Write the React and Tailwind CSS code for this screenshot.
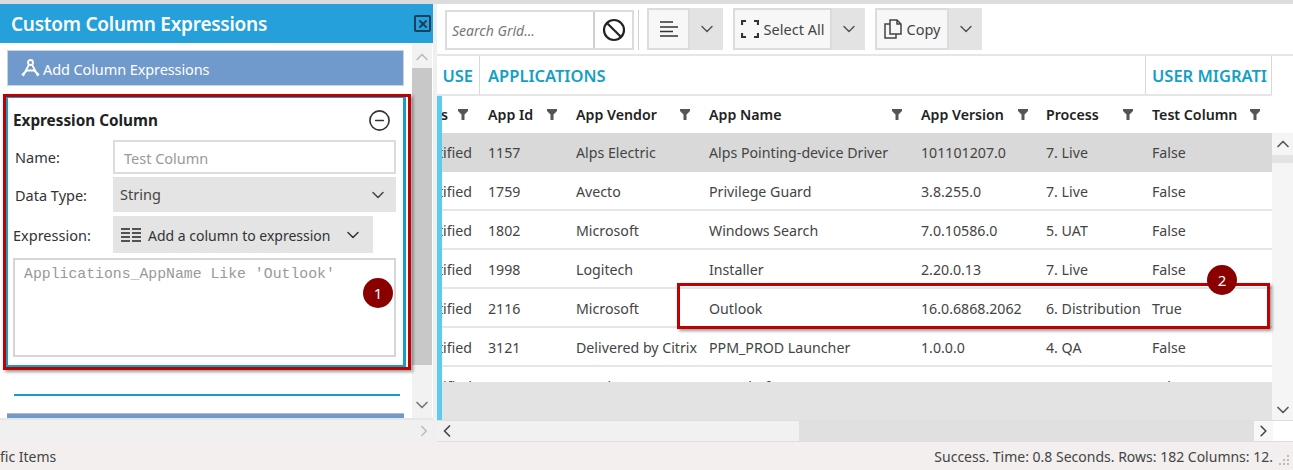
import React from 'react'
import { Ban, ChevronDown, ChevronUp, ChevronLeft, ChevronRight, X, MinusCircle } from 'lucide-react'

const columns = [
  { title: 'App Id', width: 'w-[88px]', filter: 'w-[69px]' },
  { title: 'App Vendor', width: 'w-[133px]', filter: 'w-[114px]' },
  { title: 'App Name', width: 'w-[212px]', filter: 'w-[193px]' },
  { title: 'App Version', width: 'w-[125px]', filter: 'w-[107px]' },
  { title: 'Process', width: 'w-[106px]', filter: 'w-[87px]' },
  { title: 'Test Column', width: 'w-[120px]', filter: 'w-[108px]' },
]

const rows = [
  ['1157', 'Alps Electric', 'Alps Pointing-device Driver', '101101207.0', '7. Live', 'False'],
  ['1759', 'Avecto', 'Privilege Guard', '3.8.255.0', '7. Live', 'False'],
  ['1802', 'Microsoft', 'Windows Search', '7.0.10586.0', '5. UAT', 'False'],
  ['1998', 'Logitech', 'Installer', '2.20.0.13', '7. Live', 'False'],
  ['2116', 'Microsoft', 'Outlook', '16.0.6868.2062', '6. Distribution', 'True'],
  ['3121', 'Delivered by Citrix', 'PPM_PROD Launcher', '1.0.0.0', '4. QA', 'False'],
  ['3196', 'Oracle', 'Java Platform SE', '7.0.147.0', '5. UAT', 'False'],
]

function Funnel() {
  return (
    <svg width="10" height="11" viewBox="0 0 10 11" className="shrink-0">
      <path d="M0 0h10v2L6.5 5.500V11h-3V5.500L0 2z" fill="#555" />
    </svg>
  )
}

function SplitButton({ children, width }) {
  return (
    <div className="flex h-[42px] bg-[#e3e3e3]">
      <div className={`flex items-center justify-center gap-[5px] border-2 border-[#dcdcdc] bg-[#f7f7f7] text-[#444] ${width}`}>{children}</div>
      <div className="flex w-[33px] items-center justify-center text-[#555]"><ChevronDown size={20} strokeWidth={1.8} /></div>
    </div>
  )
}

function Field({ label, children, className }) {
  return (
    <div className={`flex items-center ${className}`}>
      <div className="w-[98px] shrink-0 pt-[2px] text-[14.500px] text-[#333]">{label}</div>
      {children}
    </div>
  )
}

function LeftPanel() {
  return (
    <div className="relative flex w-[433px] shrink-0 flex-col">
      <div className="flex h-[39px] shrink-0 items-center justify-between bg-[#25a0da] pl-[11px] pr-[2px]">
        <span className="pt-[1px] text-[19px] font-semibold tracking-[-0.25px] text-white">Custom Column Expressions</span>
        <div className="flex h-[17px] w-[17px] items-center justify-center rounded-[2px] border-2 border-[#1d3f58] text-[#1d3f58]"><X size={12} strokeWidth={4} /></div>
      </div>
      <div className="flex h-[375px] shrink-0 overflow-hidden">
        <div className="flex w-[412px] flex-col overflow-hidden px-[7px] pt-[7px]">
          <div className="flex h-[36px] w-[397px] shrink-0 items-center border border-[#c9d3e2] bg-[#7099cc] pl-[13px] pt-[3px] text-[14.500px] tracking-[-0.1px] text-white">
            <svg width="19" height="19" viewBox="0 0 19 19" fill="none" stroke="white" strokeWidth="1.800" className="mr-[3px] mt-[-3px] shrink-0">
              <circle cx="9.500" cy="3.500" r="2.500" />
              <path d="M8 5.500L2 17M11 5.500L17 17M1 16l5-4.500h7l5 4.500" />
            </svg>
            Add Column Expressions
          </div>
          <div className="ml-[-2px] mt-[10px] h-[271px] w-[401px] shrink-0 border-2 border-x-[3px] border-[#14a0c6] px-[5px]">
            <div className="flex h-[34px] items-center justify-between pt-[10px] pr-[7px]">
              <span className="text-[15.300px] font-bold text-[#222]">Expression Column</span>
              <MinusCircle size={23} strokeWidth={1.700} className="text-[#333]" />
            </div>
            <div className="mt-[8px] text-[14.500px]">
              <Field label="Name:" className="pl-[2px]">
                <div className="flex h-[34px] w-[283px] items-center border-2 border-[#dcdcdc] pl-[9px] pt-[3px] text-[#999]">Test Column</div>
              </Field>
              <Field label="Data Type:" className="mt-[3px] pl-[2px]">
                <div className="flex h-[35px] w-[283px] items-center justify-between bg-[#e4e4e4] pl-[7px] pr-[8px] text-[#444]">String<ChevronDown size={20} strokeWidth={1.800} /></div>
              </Field>
              <Field label="Expression:" className="mt-[4px]">
                <div className="ml-[2px] flex h-[37px] w-[260px] items-center bg-[#e4e4e4] pl-[8px] text-[#333]">
                  <svg width="20" height="16" viewBox="0 0 20 16" stroke="#222" strokeWidth="1.500" className="mr-[7px] shrink-0">
                    <path d="M0 2h9M11 2h9M0 6h9M11 6h9M0 10h9M11 10h9M0 14h9M11 14h9" />
                  </svg>
                  <span className="whitespace-nowrap pt-[2px] text-[14px]">Add a column to expression</span>
                  <ChevronDown size={20} strokeWidth={1.800} className="ml-[13px] shrink-0" />
                </div>
              </Field>
            </div>
            <div className="mt-[5px] h-[99px] w-[383px] border-2 border-[#d6d6d6] pl-[9px] pt-[5px] font-['Liberation_Mono',monospace] text-[14.800px] leading-[18px] text-[#999]">Applications_AppName Like 'Outlook'</div>
          </div>
          <div className="ml-[7px] mt-[27px] h-[2px] w-[386px] shrink-0 bg-[#14a0c6]" />
          <div className="mt-[17px] h-[5px] w-[397px] shrink-0 border-t border-[#bbb] bg-[#7099cc]" />
        </div>
        <div className="flex w-[20px] flex-col bg-[#f2f2f2]">
          <div className="flex h-[25px] items-center justify-center pt-[3px] text-[#bbb]"><ChevronUp size={20} /></div>
          <div className="h-[297px] bg-[#c8c8c8]" />
          <div className="mt-auto flex h-[26px] items-center justify-center text-[#777]"><ChevronDown size={20} /></div>
        </div>
      </div>
      <div className="flex h-[24px] shrink-0 items-center justify-end border-t-2 border-[#e6e6e6] bg-[#f0f0f0] text-[#bbb]"><ChevronRight size={18} /></div>
      <div className="absolute left-[3px] top-[90px] h-[276px] w-[408px] border-[3px] border-[#c00000] shadow-[2px_2px_3px_rgba(0,0,0,0.4)]" />
      <div className="absolute left-[363px] top-[274px] flex h-[30px] w-[30px] items-center justify-center rounded-full bg-[#8a0000] text-[15px] text-white">1</div>
    </div>
  )
}

function Toolbar() {
  return (
    <div className="flex h-[52px] shrink-0 items-start border-b-2 border-[#e6e6e6] pl-[8px] pt-[4px] text-[14.500px]">
      <div className="mt-[2px] flex h-[40px] w-[189px] border-2 border-[#dcdcdc]">
        <div className="flex w-[148px] items-center border-r-2 border-[#d0d0d0] pl-[5px] text-[14px] italic text-[#777]">Search Grid...</div>
        <div className="flex flex-1 items-center justify-center text-[#222]"><Ban size={24} strokeWidth={2.200} /></div>
      </div>
      <div className="ml-[4px] mr-[8px] mt-[2px] h-[40px] w-[1px] bg-[#d0d0d0]" />
      <SplitButton width="w-[43px]">
        <svg width="18" height="16" viewBox="0 0 18 16" stroke="#333" strokeWidth="1.600" className="shrink-0">
          <path d="M0 1h13M0 6h18M0 10.500h13M0 15h18" />
        </svg>
      </SplitButton>
      <div className="w-[10px]" />
      <SplitButton width="w-[99px]">
        <svg width="18" height="18" viewBox="0 0 18 18" fill="none" stroke="#333" strokeWidth="2.200" className="shrink-0">
          <path d="M1 5V1h4M13 1h4v4M17 13v4h-4M5 17H1v-4" />
        </svg>
        <span className="pt-[2px]">Select All</span>
      </SplitButton>
      <div className="w-[10px]" />
      <SplitButton width="w-[74px]">
        <svg width="18" height="20" viewBox="0 0 18 20" fill="none" stroke="#444" strokeWidth="1.500" className="shrink-0">
          <path d="M6 15V1h7l4 4v10zM13 1v4h4" />
          <path d="M6 5H1v14h11v-4" />
        </svg>
        <span className="pt-[2px]">Copy</span>
      </SplitButton>
    </div>
  )
}

function Grid() {
  return (
    <div className="relative flex min-h-0 flex-1 flex-col overflow-hidden">
      <div className="flex h-[40px] w-[835px] shrink-0 items-center border-b-2 border-[#e6e6e6] text-[16.500px] font-semibold text-[#14a0c6]">
        <div className="flex h-full w-[43px] items-center justify-end border-r border-[#d8d8d8] pr-[6px] pt-[3px]">USE</div>
        <div className="flex h-full flex-1 items-center pl-[8px] pt-[3px]">APPLICATIONS</div>
        <div className="flex h-full w-[127px] items-center overflow-hidden whitespace-nowrap border-x border-[#d8d8d8] pl-[6px] pr-[3px] pt-[3px]"><span className="overflow-hidden">USER MIGRATION</span></div>
      </div>
      <div className="flex h-[324px] shrink-0">
        <div className="h-[324px] w-[5px] shrink-0 bg-[#5ccbee]" />
        <div className="flex h-[324px] w-[830px] shrink-0 flex-col">
          <div className="h-[286px] shrink-0 overflow-hidden">
            <div className="flex h-[37px] items-center text-[14.200px] font-semibold text-[#222]">
              <div className="flex w-[38px] shrink-0 items-center justify-end overflow-hidden pr-[12px]">
                <span className="mr-[10px]">ss</span><Funnel />
              </div>
              {columns.map(c => (
                <div key={c.title} className={`flex shrink-0 items-center pl-[8px] ${c.width}`}>
                  <div className={`flex items-center justify-between ${c.filter}`}>
                    <span className="whitespace-nowrap">{c.title}</span>
                    <Funnel />
                  </div>
                </div>
              ))}
            </div>
            {rows.map((r, i) => (
              <div key={r[0]} className={`flex h-[39px] shrink-0 items-center border-b-2 pt-[3px] text-[14.200px] text-[#444] ${i === 0 ? 'border-[#d9d9d9] bg-[#d9d9d9]' : 'border-[#e6e6e6]'}`}>
                <div className="flex w-[38px] shrink-0 justify-end overflow-hidden pr-[8px]">Certified</div>
                {r.map((v, j) => (
                  <div key={j} className={`shrink-0 overflow-hidden whitespace-nowrap pl-[8px] ${columns[j].width}`}>{v}</div>
                ))}
              </div>
            ))}
          </div>
          <div className="flex-1 bg-[#e3e3e3]" />
        </div>
        <div className="flex h-[324px] w-[21px] shrink-0 flex-col">
          <div className="h-[37px] shrink-0" />
          <div className="flex min-h-0 flex-1 flex-col bg-[#f5f5f5]">
            <div className="flex h-[22px] items-center justify-center text-[#555]"><ChevronUp size={20} /></div>
            <div className="h-[8px] bg-[#e3e3e3]" />
            <div className="mt-auto flex h-[20px] items-center justify-center text-[#555]"><ChevronDown size={20} /></div>
          </div>
        </div>
      </div>
      <div className="flex h-[22px] shrink-0 items-center border-y border-[#dedede]">
        <div className="flex h-full w-[362px] items-center bg-[#f1f1f1] text-[#444]"><ChevronLeft size={20} /></div>
        <div className="h-full w-[455px] bg-[#e0e0e0]" />
        <div className="flex h-full w-[19px] items-center justify-center bg-[#f7f7f7] text-[#444]"><ChevronRight size={20} /></div>
      </div>
      <div className="absolute left-[240px] top-[227px] h-[46px] w-[593px] border-[3px] border-[#c00000] shadow-[2px_2px_3px_rgba(0,0,0,0.4)]" />
      <div className="absolute left-[770px] top-[209px] flex h-[30px] w-[30px] items-center justify-center rounded-full bg-[#8a0000] text-[15px] text-white">2</div>
    </div>
  )
}

export default function App() {
  return (
    <div className="flex h-[470px] w-[1293px] flex-col overflow-hidden bg-white font-['Noto_Sans',sans-serif]">
      <div className="h-[4px] shrink-0 bg-[#dcdcdc]" />
      <div className="flex h-[438px] shrink-0">
        <LeftPanel />
        <div className="w-[4px] shrink-0 bg-[#f0f0f0]" />
        <div className="flex min-w-0 flex-1 flex-col">
          <Toolbar />
          <Grid />
        </div>
      </div>
      <div className="flex h-[28px] shrink-0 items-center justify-between bg-[#f2efee] text-[14px] text-[#444]">
        <span>fic Items</span>
        <div className="flex items-center">
          <span>Success. Time: 0.8 Seconds. Rows: 182 Columns: 12.</span>
          <svg width="20" height="14" viewBox="0 0 20 14" fill="#bbb" className="mt-[8px]">
            <path d="M14 2h2v2h-2zM10 6h2v2h-2zM14 6h2v2h-2zM6 10h2v2H6zM10 10h2v2h-2zM14 10h2v2h-2z" />
          </svg>
        </div>
      </div>
    </div>
  )
}
